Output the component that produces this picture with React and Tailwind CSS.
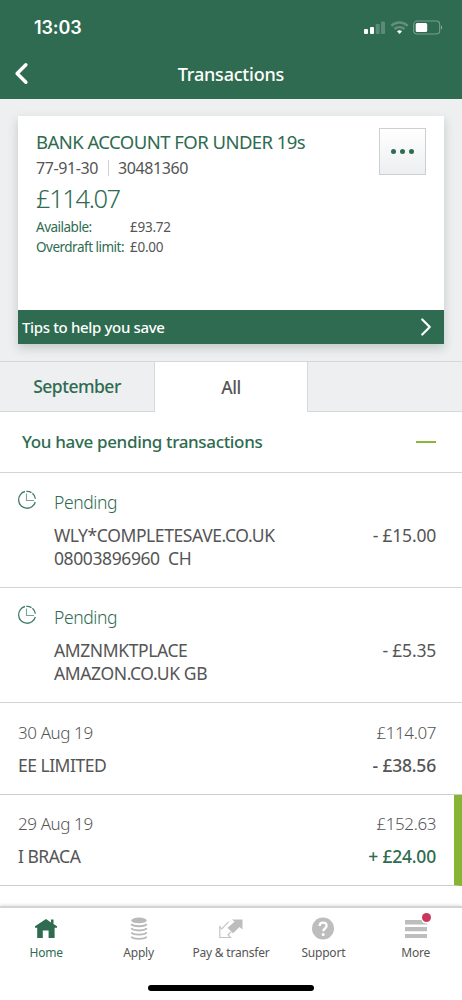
import React from 'react';
import { ChevronLeft, ChevronRight } from 'lucide-react';

const transactions = [
  { id: 1, date: '30 Aug 19', balance: '£114.07', name: 'EE LIMITED', amount: '- £38.56', credit: false },
  { id: 2, date: '29 Aug 19', balance: '£152.63', name: 'I BRACA', amount: '+ £24.00', credit: true },
];

const pending = [
  { id: 1, lines: ['WLY*COMPLETESAVE.CO.UK', '08003896960\u00a0 CH'], amount: '- £15.00' },
  { id: 2, lines: ['AMZNMKTPLACE', 'AMAZON.CO.UK GB'], amount: '- £5.35' },
];

const StatusIcons = () => (
  <svg className="h-4 w-[80px]" viewBox="0 0 80 16" fill="#fff">
    <rect x="2" y="9" width="4" height="5" rx="1" />
    <rect x="8" y="7" width="4" height="7" rx="1" />
    <rect x="13.700" y="4" width="4" height="10" rx="1" opacity="0.22" />
    <rect x="19" y="1.500" width="4" height="12.500" rx="1" opacity="0.22" />
    <g fill="none" stroke="#fff" strokeWidth="2.400" opacity="0.25">
      <path d="M29.300 5.800a12 12 0 0 1 16.400 0" />
      <path d="M32.500 9a7.500 7.500 0 0 1 10 0" />
    </g>
    <path d="M35 11.300a3.700 3.700 0 0 1 5 0L37.500 14z" />
    <rect x="51.700" y="1" width="26" height="13" rx="3.500" fill="none" stroke="#fff" strokeWidth="1.100" opacity="0.35" />
    <rect x="53.700" y="3" width="11.500" height="9" rx="1.500" />
    <path d="M79 5.500c1.300.6 1.300 3.400 0 4z" opacity="0.5" />
  </svg>
);

const ClockIcon = () => (
  <svg className="mt-[17px] h-5 w-5 shrink-0" viewBox="0 0 20 20" fill="none" stroke="#3f7d63">
    <path d="M8 1.500A8.500 8.500 0 1 0 18.300 12M9.300 1.400a8.500 8.500 0 0 1 5.200 1.200M15.400 3.200a8.500 8.500 0 0 1 3 5.600" strokeWidth="1.300" />
    <path d="M9.500 3.500V10.500H17" stroke="#7ba393" strokeWidth="1.100" />
  </svg>
);

const HomeIcon = () => (
  <svg className="h-6 w-6" viewBox="0 0 24 24" fill="#2e6b50">
    <path d="M12 2L1 9.300v1.400h2.200V21h5.600v-7.500h5.800V21h6V10.700H23V9.300L19.500 7V2.500H17v3.100z" />
  </svg>
);

const CoinsIcon = () => (
  <svg className="h-6 w-6" viewBox="0 0 24 24" fill="none" stroke="#b9b9b9" strokeWidth="1.900">
    <ellipse cx="12" cy="3.400" rx="7.800" ry="2.800" fill="#b9b9b9" stroke="none" />
    <path d="M4.400 7c1.500 3 13.700 3 15.200 0M4.400 11.200c1.500 3 13.700 3 15.200 0M4.400 15.400c1.500 3 13.700 3 15.200 0M4.400 19.600c1.500 3 13.700 3 15.200 0" />
  </svg>
);

const TransferIcon = () => (
  <svg className="h-6 w-6" viewBox="0 0 24 24" fill="none" stroke="#c4c4c4" strokeWidth="1.200">
    <path d="M9.500 4.800L2.800 11.800.8 9.800V20.500H11.500L9 17.800l3-2.800" />
    <path d="M13 2.500H23.500V12.500L20.500 10 14 16.200 8.500 10.800 15.500 4.700z" fill="#bdbdbd" stroke="none" />
  </svg>
);

const SupportIcon = () => (
  <svg className="h-6 w-6" viewBox="0 0 24 24" fill="none">
    <circle cx="12" cy="11.500" r="11" fill="#bdbdbd" />
    <path d="M8.600 9C8.600 4.500 15.600 4.700 15.600 8.800c0 2.700-3.300 2.700-3.300 5.400" stroke="#fff" strokeWidth="2.300" />
    <circle cx="12.200" cy="17.500" r="1.500" fill="#fff" />
  </svg>
);

const MoreIcon = () => (
  <svg className="h-6 w-6" viewBox="0 0 24 24" fill="#bdbdbd">
    <path d="M1 3h16.500c.5 2 2 3.200 4 3.500H23V7.500H1zM1 10h22v4.300H1zM1 16.900h22v4.200H1z" />
  </svg>
);

const navItems = [
  { label: 'Home', Icon: HomeIcon, active: true },
  { label: 'Apply', Icon: CoinsIcon },
  { label: 'Pay & transfer', Icon: TransferIcon },
  { label: 'Support', Icon: SupportIcon },
  { label: 'More', Icon: MoreIcon, badge: true },
];

const App = () => {
  return (
    <div className="flex h-[1000px] w-[462px] flex-col overflow-hidden whitespace-nowrap bg-white font-['Noto_Sans',sans-serif] text-[#555]">
      {/* Status bar and title */}
      <header className="h-[99px] shrink-0 bg-[#2e6b50] text-white">
        <div className="flex h-[55px] items-center justify-between pl-[34px] pr-5">
          <span className="font-['Inter',sans-serif] text-lg font-semibold tracking-[-0.1px]">13:03</span>
          <StatusIcons />
        </div>
        <div className="grid h-[37px] grid-cols-[1fr_auto_1fr] items-center">
          <ChevronLeft className="ml-1 h-[35px] w-[35px]" strokeWidth={2.4} />
          <h1 className="text-lg font-medium tracking-[-0.2px]">Transactions</h1>
        </div>
      </header>

      {/* Account card */}
      <section className="h-[262px] shrink-0 bg-[#edeff0] px-[18px] pt-[17px]">
        <div className="flex h-[228px] flex-col bg-white shadow-[0_4px_9px_0_rgba(70,90,80,0.25)]">
          <div className="flex flex-1 justify-between pl-[18px] pr-[18px] pt-3">
            <div>
              <h2 className="text-[18.5px] leading-7 tracking-[-0.55px] text-[#2e6b50]">BANK ACCOUNT FOR UNDER 19s</h2>
              <div className="flex items-center text-base leading-6 tracking-[-0.4px]">
                <span>77-91-30</span>
                <span className="ml-[10px] mr-[9px] h-4 w-px bg-[#d0d0d0]" />
                <span>30481360</span>
              </div>
              <p className="text-[25.5px] font-light leading-[37px] tracking-[-1.4px] text-[#2e6b50]">£114.07</p>
              <dl className="grid grid-cols-[94px_auto] text-[13.5px] leading-5 tracking-[-0.25px]">
                <dt className="tracking-[-0.5px] text-[#2e6b50]">Available:</dt>
                <dd>£93.72</dd>
                <dt className="tracking-[-0.5px] text-[#2e6b50]">Overdraft limit:</dt>
                <dd>£0.00</dd>
              </dl>
            </div>
            <button className="flex h-[47px] w-[47px] items-center justify-center gap-1 border border-[#ccd0d2] bg-gradient-to-b from-white to-[#eceef0]">
              <span className="h-[5px] w-[5px] rounded-full bg-[#2e6b50]" />
              <span className="h-[5px] w-[5px] rounded-full bg-[#2e6b50]" />
              <span className="h-[5px] w-[5px] rounded-full bg-[#2e6b50]" />
            </button>
          </div>
          <div className="flex h-[34px] items-center justify-between bg-[#2e6b50] pl-1 pr-[3px] text-white">
            <span className="text-[15px] font-medium tracking-[-0.35px]">Tips to help you save</span>
            <ChevronRight className="h-[30px] w-[30px]" strokeWidth={1.8} />
          </div>
        </div>
      </section>

      {/* Tabs */}
      <div className="flex h-[51px] shrink-0 border-t border-[#d3dad8] text-[17.5px] font-medium tracking-[-0.5px]">
        <button className="w-[155px] border-b border-r border-[#d3dad8] bg-[#edeff0] text-[#2e6b50]">September</button>
        <button className="w-[152px]">All</button>
        <div className="flex-1 border-b border-l border-[#d3dad8] bg-[#edeff0]" />
      </div>

      {/* Pending transactions */}
      <div className="flex h-[61px] shrink-0 items-center justify-between border-b border-[#d2d5d6] pl-[22px] pr-[26px]">
        <h3 className="text-[17px] font-medium tracking-[-0.34px] text-[#2e6b50]">You have pending transactions</h3>
        <span className="h-[2px] w-5 bg-[#8fb43c]" />
      </div>
      {pending.map((item) => (
        <div key={item.id} className="flex h-[115px] shrink-0 border-b border-[#d2d5d6] pl-[17px] pr-[26px]">
          <ClockIcon />
          <div className="ml-[17px] flex-1 pt-[17px]">
            <p className="text-[17.5px] font-light leading-6 tracking-[-0.4px] text-[#2e6b50]">Pending</p>
            <div className="mt-[10px] flex justify-between text-[17.5px] leading-[23px] tracking-[-0.4px]">
              <div>
                {item.lines.map((line) => (
                  <p key={line}>{line}</p>
                ))}
              </div>
              <span className="tracking-[-0.2px]">{item.amount}</span>
            </div>
          </div>
        </div>
      ))}

      {/* Completed transactions */}
      {transactions.map((tx) => (
        <div
          key={tx.id}
          className={`shrink-0 border-b border-[#c8d0ce] pl-[18px] ${
            tx.credit ? 'h-[91px] border-r-8 border-r-[#86b535] pr-[18px] pt-[17px]' : 'h-[92px] pr-[26px] pt-[18px]'
          }`}
        >
          <div className="flex justify-between text-[17px] font-light leading-6 tracking-[-0.4px]">
            <span>{tx.date}</span>
            <span>{tx.balance}</span>
          </div>
          <div className="mt-2 flex justify-between text-[17.5px] leading-6 tracking-[-0.5px]">
            <span>{tx.name}</span>
            <span className={`font-medium tracking-[-0.2px] ${tx.credit ? 'text-[#2e6b50]' : ''}`}>{tx.amount}</span>
          </div>
        </div>
      ))}

      {/* Bottom navigation */}
      <nav className="mt-auto flex h-[94px] shrink-0 flex-col border-t-2 border-[#d4d4d4] shadow-[0_-1px_3px_rgba(0,0,0,0.12)]">
        <div className="flex pt-[9px]">
          {navItems.map(({ label, Icon, active, badge }) => (
            <div key={label} className="flex w-1/5 flex-col items-center">
              <div className="relative">
                <Icon />
                {badge && <span className="absolute -top-[4px] left-[18px] h-[9px] w-[9px] rounded-full bg-[#c8385a]" />}
              </div>
              <span className={`mt-[2px] text-xs leading-5 tracking-[-0.2px] ${active ? 'text-[#2e6b50]' : ''}`}>{label}</span>
            </div>
          ))}
        </div>
        <div className="mx-auto mt-[22px] h-[6px] w-[166px] rounded-full bg-black" />
      </nav>
    </div>
  );
};

export default App;
